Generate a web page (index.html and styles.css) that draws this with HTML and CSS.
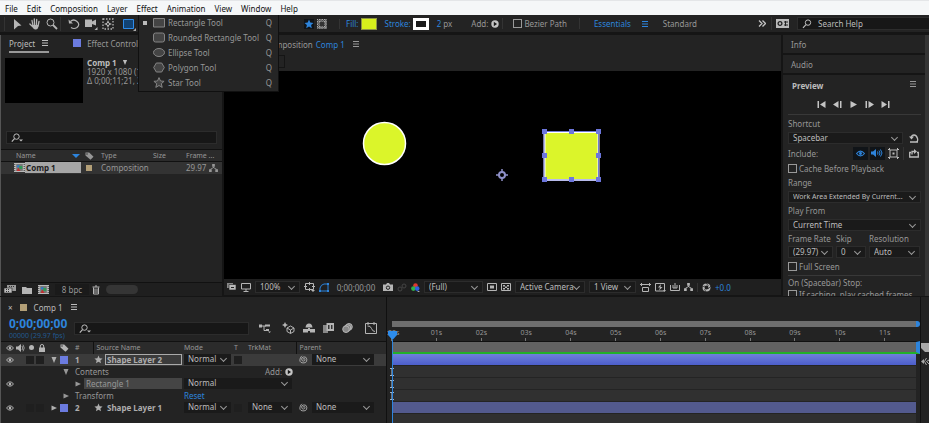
FILE: index.html
```html
<!DOCTYPE html>
<html lang="en">
<head>
<meta charset="utf-8">
<meta name="viewport" content="width=device-width, initial-scale=1">
<title>Comp 1</title>
<link rel="stylesheet" href="styles.css">
</head>
<body>
<svg class="defs" aria-hidden="true">
  <symbol id="burger" viewBox="0 0 8 8"><path d="M1 1.500h6M1 4h6M1 6.500h6" stroke="currentColor" fill="none"/></symbol>
  <symbol id="search" viewBox="0 0 12 10"><circle cx="6" cy="3.600" r="2.700" fill="none" stroke="currentColor"/><path d="M4 5.600L1 8.800" stroke="currentColor" stroke-width="1.200"/></symbol>
  <symbol id="search-menu" viewBox="0 0 12 10"><circle cx="5.500" cy="3.600" r="2.700" fill="none" stroke="currentColor"/><path d="M3.500 5.600L.8 8.600" stroke="currentColor" stroke-width="1.200"/><path d="M8 6.500h4l-2 2z" fill="currentColor"/></symbol>
  <symbol id="eye" viewBox="0 0 8 6"><path d="M.5 3Q4-1.300 7.500 3 4 7.300.5 3z" fill="none" stroke="currentColor"/><circle cx="4" cy="3" r="1.300" fill="currentColor"/></symbol>
  <symbol id="speaker" viewBox="0 0 9 8"><path d="M0 2.500h2L5 0v8L2 5.500H0z" fill="currentColor"/><path d="M6 2q1.500 2 0 4M7 .7q2.500 3.300 0 6.600" fill="none" stroke="currentColor" stroke-width=".8"/></symbol>
  <symbol id="lock" viewBox="0 0 8 8"><path d="M1 3.500h6V8H1z" fill="currentColor"/><path d="M2.300 4V2q0-1.500 1.700-1.500T5.700 2v2" fill="none" stroke="currentColor"/></symbol>
  <symbol id="tag" viewBox="0 0 9 8"><path d="M.5.500h3.700L8.500 4.700 5.500 7.700.5 3.500z" fill="currentColor"/><circle cx="2" cy="2" r=".7" fill="#232323"/></symbol>
  <symbol id="star" viewBox="0 0 10 10"><path d="M5 .6l1.300 3 3.200.3-2.400 2.200.7 3.200L5 7.600 2.200 9.300l.7-3.200L.5 3.900l3.200-.3z" fill="currentColor"/></symbol>
  <symbol id="down" viewBox="0 0 6 6"><path d="M.5 0h5L3 6z" fill="currentColor"/></symbol>
  <symbol id="right" viewBox="0 0 6 6"><path d="M.5.500v5L6 3z" fill="currentColor"/></symbol>
  <symbol id="add" viewBox="0 0 8 8"><circle cx="4" cy="4" r="3.700" fill="currentColor"/><path d="M2.800 1.800v4.400L6 4z" fill="#181818"/></symbol>
  <symbol id="flow" viewBox="0 0 10 9"><path d="M3.500 0h3v3h-3zM0 6h3v3H0zM7 6h3v3H7z" fill="currentColor"/><path d="M5 3v1.500M1.500 6l3.500-2 3.500 2" fill="none" stroke="currentColor"/></symbol>
  <symbol id="comp" viewBox="0 0 11 9"><path d="M0 0h11v9H0z" fill="#b9b9b9"/><path d="M2.200 1h6.600v7H2.200z" fill="#777"/><path d="M.8 1v7M10.200 1v7" stroke="#333" stroke-width="1" stroke-dasharray="1 1"/><circle cx="4.300" cy="3.300" r="1.400" fill="#317bc4"/><path d="M5.300 3h3v3h-3z" fill="#2f9a57"/><path d="M4.300 4.500L6.500 8h-4z" fill="#bf3030"/></symbol>
  <symbol id="whip" viewBox="0 0 9 9"><path d="M4 4.500q0-1 1-1t1 1.200-1.500 1.400T2.600 4.300 4.800 1.900 7.800 4.300 6 7.700 2 7.400 1 4 3 .8" fill="none" stroke="currentColor" stroke-width=".9"/></symbol>
  <symbol id="frame" viewBox="0 0 11 11"><path d="M2 2h7v7H2z" fill="none" stroke="currentColor"/><path d="M0 1.500h2M1.500 0v2M9 1.500h2M9.500 0v2M0 9.500h2M1.500 9v2M9 9.500h2M9.500 9v2" stroke="currentColor"/><path d="M4.500 4.500h2v2h-2z" fill="currentColor"/></symbol>
  <symbol id="ibeam" viewBox="0 0 6 8"><path d="M1 .5h4M3 .5v7M1 7.500h4" fill="none" stroke="#9fb4c8" stroke-width="1.200"/></symbol>
</svg>

<nav class="menubar" aria-label="Application menu">
  <button>File</button><button>Edit</button><button>Composition</button><button>Layer</button><button>Effect</button><button>Animation</button><button>View</button><button>Window</button><button>Help</button>
</nav>

<header class="toolbar">
  <div class="tools">
    <button aria-label="Selection"><svg width="10" height="12" viewBox="0 0 10 12"><path d="M1 1l7.500 6.500L5 8l-4 3.500z" fill="currentColor"/></svg></button>
    <button aria-label="Hand"><svg width="12" height="12" viewBox="0 0 12 12"><path d="M4 8L3 2.500M5.500 7.500L5.300 1M7.300 7.500L7.700 1.500M9 8l1-4.500M3.500 8.500L.9 6" stroke="currentColor" stroke-width="1.300" stroke-linecap="round"/><path d="M2.500 7h7Q9.500 12 6 11.500 4 11 2.500 7z" fill="currentColor"/></svg></button>
    <button aria-label="Zoom"><svg width="12" height="12" viewBox="0 0 12 12"><circle cx="4.500" cy="4.500" r="3.500" fill="none" stroke="currentColor"/><path d="M7 7l4 4" stroke="currentColor" stroke-width="1.800"/></svg></button>
  </div>
  <div class="tools spaced">
    <button aria-label="Rotate"><svg width="12" height="12" viewBox="0 0 12 12"><path d="M2.500 3.500Q5.500.5 9 3.500t0 6q-3 2-6 0" fill="none" stroke="currentColor" stroke-width="1.200"/><path d="M.5 1.500L1 5.500h4z" fill="currentColor"/></svg></button>
    <button aria-label="Camera"><svg width="14" height="12" viewBox="0 0 14 12"><path d="M1 1.500h7v2L12 1.500v6L8 6v3H1z" fill="currentColor"/><path d="M13.500 9v3h-3z" fill="currentColor"/></svg></button>
    <button aria-label="Pan behind"><svg width="12" height="12" viewBox="0 0 12 12"><path d="M1 1h10v10H1z" fill="none" stroke="currentColor" stroke-width="1.300" stroke-dasharray="1.500 1.500"/><path d="M6 2l1.200 2.800L10 6 7.200 7.200 6 10 4.800 7.200 2 6l2.800-1.200z" fill="currentColor"/><circle cx="6" cy="6" r="1" fill="#232323"/></svg></button>
  </div>
  <button class="shape-tool" aria-label="Rectangle"><svg width="14" height="14" viewBox="0 0 14 14"><path d="M1.500 2.500h10v9h-10z" fill="#124374" stroke="#2d8ceb"/><path d="M14 11v3h-3z" fill="#aaa"/></svg></button>
  <div class="shape-options">
    <button class="pressed" aria-label="Tool creates shape"><svg class="blue" width="10" height="10"><use href="#star"/></svg></button>
    <button aria-label="Tool creates mask"><svg width="10" height="10" viewBox="0 0 10 10"><path d="M0 0h10v10H0z" fill="#aaa"/><path d="M0 1.500h10M0 4h10M0 6.500h10M0 9h10M1.500 0v10M4 0v10M6.500 0v10M9 0v10" stroke="#262626" stroke-width=".8" stroke-dasharray="1.300 1"/><circle cx="5" cy="5" r="2.500" fill="#333"/></svg></button>
  </div>
  <div class="paint"><button class="link">Fill:</button><button class="swatch fill" aria-label="Fill color"></button></div>
  <div class="paint outline-paint"><button class="link">Stroke:</button><button class="swatch stroke" aria-label="Stroke color"></button></div>
  <div class="width"><button class="link">2</button><span>px</span></div>
  <button class="add-path">Add: <svg width="8" height="8"><use href="#add"/></svg></button>
  <label class="check bezier"><input type="checkbox">Bezier Path</label>
  <div class="workspaces">
    <button class="link">Essentials</button><svg class="blue" width="8" height="8"><use href="#burger"/></svg><button>Standard</button>
  </div>
  <button class="overflow" aria-label="More workspaces"><svg width="8" height="7" viewBox="0 0 8 7"><path d="M1 .5l3 3-3 3M4.500.500l3 3-3 3" fill="none" stroke="currentColor" stroke-width="1.300"/></svg></button>
  <div class="help">
    <svg width="13" height="9" viewBox="0 0 13 9"><path d="M0 0h13v9H0z" fill="#bbb"/><circle cx="4" cy="4.500" r="1.900" fill="none" stroke="#222" stroke-width="1.300"/><path d="M8 3h4M8 6h4M9.500 2v5" stroke="#222"/></svg>
    <label class="field"><svg width="12" height="10"><use href="#search"/></svg><input type="text" placeholder="Search Help" aria-label="Search Help"></label>
  </div>
  <ul class="flyout">
    <li><button><i class="mark"></i><svg width="12" height="11" viewBox="0 0 12 11"><path d="M.5 1.500h11v8.500H.5z"/></svg><span>Rectangle Tool</span><kbd>Q</kbd></button></li>
    <li><button><i></i><svg width="12" height="11" viewBox="0 0 12 11"><rect x=".5" y="1" width="11" height="9" rx="2"/></svg><span>Rounded Rectangle Tool</span><kbd>Q</kbd></button></li>
    <li><button><i></i><svg width="12" height="11" viewBox="0 0 12 11"><ellipse cx="6" cy="5.500" rx="5.500" ry="4"/></svg><span>Ellipse Tool</span><kbd>Q</kbd></button></li>
    <li><button><i></i><svg width="12" height="11" viewBox="0 0 12 11"><path d="M3.300 1h5.400l2.600 4.500L8.700 10H3.300L.7 5.500z"/></svg><span>Polygon Tool</span><kbd>Q</kbd></button></li>
    <li><button><i></i><svg width="12" height="11" viewBox="0 0 12 11"><path d="M6 .6l1.500 3.400 3.600.3-2.800 2.400.9 3.700L6 8.500l-3.200 1.900.9-3.700L.9 4.300l3.600-.3z"/></svg><span>Star Tool</span><kbd>Q</kbd></button></li>
  </ul>
</header>

<main class="panels">
  <section class="project">
    <div class="tabs">
      <button class="active">Project <svg width="8" height="8"><use href="#burger"/></svg></button>
      <button><i class="chip violet"></i>Effect Controls</button>
    </div>
    <div class="summary">
      <div class="thumb"></div>
      <div><h2>Comp 1 <svg width="6" height="5"><use href="#down"/></svg></h2><p>1920 x 1080 (1</p><p>Δ 0;00;11;21, 2</p></div>
    </div>
    <label class="field filter"><svg width="12" height="10"><use href="#search-menu"/></svg><input type="text" aria-label="Search project"></label>
    <table class="items">
      <colgroup><col class="w-icon"><col class="w-name"><col class="w-tag"><col class="w-type"><col class="w-size"><col class="w-rate"><col></colgroup>
      <thead><tr><th></th><th><span class="sorted">Name <svg class="blue" width="8" height="4" viewBox="0 0 8 4"><path d="M0 0h8L4 4z" fill="currentColor"/></svg></span></th><th><svg width="9" height="8"><use href="#tag"/></svg></th><th>Type</th><th>Size</th><th>Frame ...</th><th></th></tr></thead>
      <tbody><tr><td class="end"><svg width="11" height="9"><use href="#comp"/></svg></td><td><span class="picked">Comp 1</span></td><td><i class="chip sand"></i></td><td>Composition</td><td></td><td>29.97</td><td><svg width="9" height="8"><use href="#flow"/></svg></td></tr></tbody>
    </table>
    <footer class="bar">
      <button aria-label="Interpret footage"><svg width="12" height="9" viewBox="0 0 12 9"><path d="M3 0h9v6H3z" fill="#999"/><path d="M0 3h8v5H0z" fill="#bbb" stroke="#222" stroke-width=".6"/><path d="M2 4.500h4M2 6.500h4M5 1.500h5" stroke="#333" stroke-dasharray="1 1"/></svg></button>
      <button aria-label="New folder"><svg width="10" height="8" viewBox="0 0 10 8"><path d="M0 1h4l1 1h5v6H0z" fill="currentColor"/></svg></button>
      <button aria-label="New composition"><svg width="11" height="9"><use href="#comp"/></svg></button>
      <button class="depth">8 bpc</button>
      <button aria-label="Delete"><svg width="8" height="10" viewBox="0 0 8 10"><path d="M.5 2h7M3 1h2M1.500 2.500v6.500h5V2.500M3 3.500v4.500M5 3.500v4.500" fill="none" stroke="currentColor"/></svg></button>
      <i class="scroll"></i>
    </footer>
  </section>

  <section class="viewer">
    <div class="tabs"><button>Composition <b>Comp 1</b></button><svg width="8" height="8"><use href="#burger"/></svg></div>
    <div class="crumbs"><button aria-label="Composition navigator"></button></div>
    <div class="stage">
      <svg viewBox="0 0 557 208" role="img" aria-label="Composition">
        <circle cx="160.500" cy="72.500" r="21" fill="#dbf52a" stroke="#fff" stroke-width="1.500"/>
        <g fill="none" stroke="#8e90c8"><circle cx="278" cy="104" r="3" stroke-width="2"/><path d="M278 98v4M278 106v4M272 104h4M280 104h4" stroke-width="1.500"/></g>
        <path d="M320.500 61h54v48h-54z" fill="#dbf52a" stroke="#fff" stroke-width="2"/>
        <path d="M320 60.500h54.500v48.500H320z" fill="none" stroke="#7279d8"/>
        <path d="M318 58h5v5h-5zM345 58h5v5h-5zM372 58h5v5h-5zM318 82h5v5h-5zM372 82h5v5h-5zM318 106h5v5h-5zM345 106h5v5h-5zM372 106h5v5h-5z" fill="#6c76dc"/>
      </svg>
    </div>
    <footer class="bar">
      <button aria-label="Always preview"><svg width="10" height="8" viewBox="0 0 10 8"><path d="M0 0h6v5H0z" fill="#888"/><path d="M2 1.500h7V7H2z" fill="#bbb" stroke="#222" stroke-width=".6"/><path d="M4 4.500h3" stroke="#222"/></svg></button>
      <button aria-label="Primary viewer"><svg width="10" height="9" viewBox="0 0 10 9"><path d="M.5.500h9v5.500h-9zM5 6v2M2.500 8.500h5" fill="none" stroke="currentColor"/></svg></button>
      <span class="select zoom"><select aria-label="Magnification"><option>100%</option></select></span>
      <button aria-label="Guides"><svg width="11" height="10" viewBox="0 0 11 10"><path d="M1.500 1.500h8v6h-8zM5.500 0v3M5.500 6v3M0 4.500h3M8 4.500h3" fill="none" stroke="currentColor"/><path d="M7 8h4l-2 2z" fill="currentColor"/></svg></button>
      <button class="blue" aria-label="Mask visibility"><svg width="10" height="9" viewBox="0 0 10 9"><path d="M1 8V5q1-3.500 4-4h4v7z" fill="none" stroke="currentColor"/><path d="M0 7h2v2H0zM8 7h2v2H8zM8 0h2v2H8z" fill="currentColor"/></svg></button>
      <button class="time">0;00;00;00</button>
      <button aria-label="Snapshot"><svg width="10" height="8" viewBox="0 0 10 8"><path d="M0 1.500h3L4 0h2l1 1.500h3V8H0z" fill="currentColor"/><circle cx="5" cy="4.700" r="1.700" fill="none" stroke="#222"/></svg></button>
      <button aria-label="Show snapshot"><svg class="dim" width="10" height="9" viewBox="0 0 10 9"><circle cx="3" cy="6" r="2" fill="none" stroke="currentColor"/><circle cx="7" cy="3" r="2" fill="none" stroke="currentColor"/></svg></button>
      <button aria-label="Channels"><svg width="9" height="9" viewBox="0 0 9 9"><circle cx="4.500" cy="2.500" r="2.300" fill="#e03a2e"/><circle cx="2.400" cy="5.600" r="2.300" fill="#30b04a"/><circle cx="6.200" cy="5.600" r="2.300" fill="#2e62dd"/><path d="M6 8h3L7.500 9z" fill="#ccc"/></svg></button>
      <span class="select quality"><select aria-label="Resolution"><option>(Full)</option></select></span>
      <button aria-label="Region of interest"><svg width="10" height="8" viewBox="0 0 10 8"><path d="M.5.500h9v7h-9z" fill="none" stroke="currentColor"/><path d="M3 2.500h4v3H3z" fill="currentColor"/></svg></button>
      <button aria-label="Transparency grid"><svg width="10" height="8" viewBox="0 0 10 8"><path d="M.5.500h9v7h-9z" fill="none" stroke="currentColor"/><path d="M2 2h2v1.500H2zM6 2h2v1.500H6zM4 3.500h2V5H4zM2 5h2v1.500H2zM6 5h2v1.500H6z" fill="currentColor"/></svg></button>
      <span class="select camera"><select aria-label="Camera"><option>Active Camera</option></select></span>
      <span class="select views"><select aria-label="Views"><option>1 View</option></select></span>
      <button aria-label="Pixel aspect"><svg width="11" height="9" viewBox="0 0 11 9"><path d="M0 1.500h11M1.500 0v3M9.500 0v3M2.500 4.500h6v4h-6z" fill="none" stroke="currentColor"/></svg></button>
      <button aria-label="Fast previews"><svg width="11" height="9" viewBox="0 0 11 9"><path d="M.5.500h9v7.500h-9z" fill="none" stroke="currentColor"/><path d="M6 1L3 4.500h2L4 7.500 7.500 4h-2z" fill="currentColor"/><path d="M8 7h3L9.500 9z" fill="currentColor"/></svg></button>
      <button aria-label="Timeline"><svg width="10" height="8" viewBox="0 0 10 8"><path d="M.5 2v5.500h9V2M3 2v3h4V2M5 0v5" fill="none" stroke="currentColor"/></svg></button>
      <button aria-label="Flowchart"><svg width="9" height="8"><use href="#flow"/></svg></button>
      <button class="exposure" aria-label="Reset exposure"><svg width="9" height="9" viewBox="0 0 9 9"><circle cx="4.500" cy="4.500" r="3" fill="none" stroke="currentColor" stroke-width="2"/><path d="M4 0l2.500 3M9 3L6 6M4 9L2.500 6M0 4l3-1" stroke="#222" stroke-width=".7"/></svg></button>
      <button class="link">+0.0</button>
    </footer>
  </section>

  <aside class="side">
    <button class="fold">Info</button>
    <button class="fold">Audio</button>
    <div class="preview">
      <h2>Preview <svg width="8" height="8"><use href="#burger"/></svg></h2>
      <div class="transport">
        <button aria-label="First frame"><svg width="9" height="7" viewBox="0 0 9 7"><path d="M.5 0h1.500v7H.5zM8.500 0v7L3 3.500z" fill="currentColor"/></svg></button>
        <button aria-label="Previous frame"><svg width="9" height="7" viewBox="0 0 9 7"><path d="M7 0h1.500v7H7zM5.500 0v7L0 3.500z" fill="currentColor"/></svg></button>
        <button aria-label="Play"><svg width="9" height="7" viewBox="0 0 9 7"><path d="M1.500 0v7L8 3.500z" fill="currentColor"/></svg></button>
        <button aria-label="Next frame"><svg width="9" height="7" viewBox="0 0 9 7"><path d="M.5 0H2v7H.5zM3.500 0v7L9 3.500z" fill="currentColor"/></svg></button>
        <button aria-label="Last frame"><svg width="9" height="7" viewBox="0 0 9 7"><path d="M7 0h1.500v7H7zM.5 0v7L6 3.500z" fill="currentColor"/></svg></button>
      </div>
      <label for="shortcut">Shortcut</label>
      <div class="line"><span class="select grow"><select id="shortcut"><option>Spacebar</option></select></span><button aria-label="Reset"><svg width="10" height="9" viewBox="0 0 10 9"><path d="M2 4Q2.500 1 5 1t3.500 3.500T6 8H1M6 8h3" fill="none" stroke="currentColor" stroke-width="1.300"/><path d="M0 2.500h5L2.500 5.500z" fill="currentColor"/></svg></button></div>
      <div class="line include"><span>Include:</span>
        <button class="pressed blue" aria-label="Video"><svg width="9" height="7"><use href="#eye"/></svg></button>
        <button class="pressed blue" aria-label="Audio"><svg width="12" height="8" viewBox="0 0 12 8"><path d="M0 2.500h2L5 0v8L2 5.500H0z" fill="currentColor"/><path d="M6.500 2.500q1 1.500 0 3M8 1.500q2 2.500 0 5M9.500.5q3 3.500 0 7" fill="none" stroke="currentColor"/></svg></button>
        <button aria-label="Overlays"><svg width="11" height="11"><use href="#frame"/></svg></button>
        <button class="loop" aria-label="Loop"><svg width="10" height="9" viewBox="0 0 10 9"><path d="M2 3.500H.700V8h8.600V3.500H8M3 5.500V2.500h3" fill="none" stroke="currentColor" stroke-width="1.300"/><path d="M5 0v5l3-2.500z" fill="currentColor"/></svg></button>
      </div>
      <label class="check"><input type="checkbox">Cache Before Playback</label>
      <label for="range">Range</label>
      <span class="select dense"><select id="range"><option>Work Area Extended By Current...</option></select></span>
      <label for="from">Play From</label>
      <span class="select"><select id="from"><option>Current Time</option></select></span>
      <div class="trio">
        <label for="rate">Frame Rate</label><label for="skip">Skip</label><label for="res">Resolution</label>
        <span class="select"><select id="rate"><option>(29.97)</option></select></span><span class="select"><select id="skip"><option>0</option></select></span><span class="select"><select id="res"><option>Auto</option></select></span>
      </div>
      <label class="check"><input type="checkbox">Full Screen</label>
      <p class="stop">On (Spacebar) Stop:</p>
      <label class="check"><input type="checkbox">If caching, play cached frames</label>
    </div>
  </aside>
</main>

<section class="timeline">
  <div class="layers">
    <div class="tabs"><button class="close" aria-label="Close">×</button><i class="chip sand"></i><button>Comp 1</button><svg width="8" height="8"><use href="#burger"/></svg></div>
    <div class="controls">
      <div class="clock"><button>0;00;00;00</button><small>00000 (29.97 fps)</small></div>
      <label class="field"><svg width="12" height="10"><use href="#search-menu"/></svg><input type="text" aria-label="Search layers"></label>
      <div class="switches">
        <button aria-label="Mini-flowchart"><svg width="12" height="10" viewBox="0 0 12 10"><path d="M0 3h7M5 3v4.500h2" fill="none" stroke="currentColor"/><path d="M0 1.500h3v3H0zM6 1.500h5v2H6zM7 6h3v2H7z" fill="currentColor"/><path d="M9 8.500h3L10.500 10z" fill="currentColor"/></svg></button>
        <button aria-label="Draft 3D"><svg width="13" height="12" viewBox="0 0 13 12"><path d="M8.500 4l3.500 2v3.500l-3.500 2L5 9.500V6zM5 6l3.500 2L12 6M8.500 8v3.500" fill="none" stroke="currentColor"/><path d="M3 0l1 2 2 1-2 1-1 2-1-2-2-1 2-1z" fill="currentColor"/></svg></button>
        <button aria-label="Hide shy layers"><svg width="12" height="10" viewBox="0 0 12 10"><path d="M2.500 4.500Q3 .5 6 .5t3.500 4z" fill="currentColor"/><path d="M0 6h5v3.500H0zM7 6h5v3.500H7zM5 5h2v3H5z" fill="currentColor"/></svg></button>
        <button aria-label="Frame blending"><svg width="11" height="10" viewBox="0 0 11 10"><path d="M0 2h5v8H0z" fill="#888"/><path d="M3.500 0H11v8H3.500z" fill="currentColor"/><path d="M5 2h1.500v4H5zM8 2h1.500v4H8z" fill="#333"/></svg></button>
        <button aria-label="Motion blur"><svg width="11" height="10" viewBox="0 0 11 10"><circle cx="7" cy="3.800" r="3.300" fill="#888" stroke="currentColor"/><circle cx="5.500" cy="5" r="3.300" fill="#777" stroke="currentColor"/><circle cx="4" cy="6.200" r="3.300" fill="#888" stroke="currentColor"/></svg></button>
        <button aria-label="Graph editor"><svg width="12" height="12" viewBox="0 0 12 12"><path d="M.5 1.500h11v10H.5zM3 0v3M9 0v3" fill="none" stroke="currentColor"/><path d="M2.500 4q3-.5 4 2.500t3.500 3" fill="none" stroke="currentColor"/></svg></button>
      </div>
    </div>
    <table class="outline">
      <colgroup><col class="c-av"><col class="c-twirl"><col class="c-label"><col class="c-num"><col class="c-name"><col class="c-mode"><col class="c-t"><col class="c-trk"><col></colgroup>
      <thead><tr>
        <th><span class="av"><svg width="8" height="6"><use href="#eye"/></svg><svg width="9" height="8"><use href="#speaker"/></svg><i class="solo"></i><svg width="8" height="8"><use href="#lock"/></svg></span></th>
        <th></th><th><svg width="9" height="8"><use href="#tag"/></svg></th><th>#</th><th class="rule">Source Name</th><th>Mode</th><th>T</th><th>TrkMat</th><th class="rule">Parent</th></tr></thead>
      <tbody>
        <tr class="layer selected">
          <td><span class="av"><svg width="8" height="6"><use href="#eye"/></svg><i></i><i class="box"></i><i class="box"></i></span></td>
          <td class="end"><svg width="6" height="6"><use href="#down"/></svg></td><td><i class="chip violet"></i></td><td class="num">1</td>
          <td><span class="name"><svg width="9" height="9"><use href="#star"/></svg><b class="outlined">Shape Layer 2</b></span></td>
          <td><span class="select"><select aria-label="Mode 1"><option>Normal</option></select></span></td><td><i class="box"></i></td><td></td>
          <td><span class="parent"><svg width="9" height="9"><use href="#whip"/></svg><span class="select"><select aria-label="Parent 1"><option>None</option></select></span></span></td>
        </tr>
        <tr><td></td><td></td><td class="inset"><svg width="6" height="6"><use href="#down"/></svg></td><td colspan="4">Contents</td><td colspan="2"><span class="adder">Add: <svg width="8" height="8"><use href="#add"/></svg></span></td></tr>
        <tr><td><span class="av"><svg width="8" height="6"><use href="#eye"/></svg></span></td><td></td><td></td><td colspan="2"><span class="prop"><svg width="6" height="6"><use href="#right"/></svg><span>Rectangle 1</span></span></td><td colspan="3"><span class="select blend"><select aria-label="Rectangle mode"><option>Normal</option></select></span></td><td></td></tr>
        <tr><td></td><td></td><td class="inset"><svg width="6" height="6"><use href="#right"/></svg></td><td colspan="2">Transform</td><td colspan="4"><button class="link">Reset</button></td></tr>
        <tr class="layer">
          <td><span class="av"><svg width="8" height="6"><use href="#eye"/></svg><i></i><i class="box"></i><i class="box"></i></span></td>
          <td class="end"><svg width="6" height="6"><use href="#right"/></svg></td><td><i class="chip violet"></i></td><td class="num">2</td>
          <td><span class="name"><svg width="9" height="9"><use href="#star"/></svg><b>Shape Layer 1</b></span></td>
          <td><span class="select"><select aria-label="Mode 2"><option>Normal</option></select></span></td><td><i class="box"></i></td><td><span class="select matte"><select aria-label="Track matte 2"><option>None</option></select></span></td>
          <td><span class="parent"><svg width="9" height="9"><use href="#whip"/></svg><span class="select"><select aria-label="Parent 2"><option>None</option></select></span></span></td>
        </tr>
      </tbody>
    </table>
  </div>
  <div class="graph">
    <div class="navigator"></div>
    <div class="ruler"><span>:00s</span><span>01s</span><span>02s</span><span>03s</span><span>04s</span><span>05s</span><span>06s</span><span>07s</span><span>08s</span><span>09s</span><span>10s</span><span>11s</span></div>
    <div class="workarea"></div>
    <div class="tracks">
      <div class="clip bright"></div>
      <div><svg width="6" height="8"><use href="#ibeam"/></svg></div>
      <div><svg width="6" height="8"><use href="#ibeam"/></svg></div>
      <div><svg width="6" height="8"><use href="#ibeam"/></svg></div>
      <div class="clip"></div>
      <div class="rest"></div>
    </div>
    <i class="needle"></i>
    <svg class="playhead" width="11" height="9" viewBox="0 0 11 9"><path d="M1 0h9v4L5.500 9 1 4z" fill="#2d8ceb"/></svg>
  </div>
  <div class="gutter">
    <svg width="8" height="9" viewBox="0 0 8 9"><path d="M0 0h8v9H4L0 5z" fill="#aaa"/></svg>
    <svg width="8" height="9" viewBox="0 0 8 9"><path d="M0 4.500L3 2v5z" fill="#aaa"/><path d="M5.500 1L3.500 4.500l2 3.500M8 3L5.500 4.500 8 7" fill="none" stroke="#aaa"/></svg>
  </div>
</section>
</body>
</html>
```
FILE: styles.css
```css
:root {
  --panel: #232323;
  --edge: #151515;
  --well: #171717;
  --text: #979797;
  --bright: #bdbdbd;
  --blue: #2d84dc;
}
* { box-sizing: border-box; }
body {
  margin: 0;
  min-height: 100vh;
  display: flex;
  flex-direction: column;
  background: var(--edge);
  color: var(--text);
  font: 8px/11px "Noto Sans", "Open Sans", sans-serif;
}
button, input, select {
  margin: 0;
  padding: 0;
  border: 0;
  background: none;
  color: inherit;
  font: inherit;
}
button { display: flex; align-items: center; white-space: nowrap; }
input[type="text"] { min-width: 0; flex: 1; outline: 0; }
h2, p, ul { margin: 0; padding: 0; font-size: inherit; list-style: none; }
svg { display: block; flex: none; }
i { display: block; }
.defs { position: absolute; width: 0; height: 0; }
.blue, .link { color: var(--blue); }
.dim { color: #444; }
.pressed { background: #101418; }

.chip { width: 8px; height: 8px; flex: none; }
.violet { background: #6b7bdf; }
.sand { background: #b39f77; }

.field {
  display: flex;
  align-items: center;
  gap: 6px;
  height: 13px;
  padding: 0 4px;
  background: var(--well);
  border: 1px solid #2c2c2c;
  color: var(--bright);
}
.field input::placeholder { color: var(--bright); opacity: 1; }

.select {
  position: relative;
  display: block;
  height: 12px;
  background: #1a1a1a;
  border: 1px solid #2c2c2c;
  color: var(--bright);
}
.select select {
  appearance: none;
  display: block;
  width: 100%;
  height: 10px;
  padding: 0 10px 0 4px;
  line-height: 10px;
}
.select::after {
  content: "";
  position: absolute;
  top: 2px;
  right: 5px;
  width: 4px;
  height: 4px;
  border: solid #999;
  border-width: 0 1px 1px 0;
  transform: rotate(45deg);
  pointer-events: none;
}
.dense { font-size: 7px; }

.check { display: flex; align-items: center; gap: 2px; white-space: nowrap; }
.check input {
  appearance: none;
  width: 9px;
  height: 9px;
  border: 1px solid #999;
}

.tabs { display: flex; align-items: center; }

/* Menu bar */
.menubar {
  display: flex;
  align-items: center;
  gap: 9px;
  height: 15px;
  padding: 0 5px;
  background: #f5f7f8;
  border-top: 1px solid #e4e6e8;
  color: #111;
}

/* Toolbar */
.toolbar {
  position: relative;
  z-index: 2;
  display: flex;
  align-items: center;
  height: 20px;
  padding-left: 4px;
  background: var(--panel);
  border-bottom: 3px solid var(--edge);
}
.tools { display: flex; border-left: 1px solid #333; padding-left: 4px; width: 56px; }
.tools button { width: 17px; height: 14px; justify-content: center; color: #b5b5b5; }
.spaced { padding-left: 4px; }
.shape-tool { margin-left: 6px; }
.shape-options { display: flex; gap: 3px; margin-left: 168px; width: 36px; border-right: 1px solid #333; }
.paint { display: flex; align-items: center; gap: 2px; margin-left: 6px; }
.outline-paint { margin-left: 8px; }
.swatch { width: 16px; height: 12px; }
.fill { background: #d7f01c; border: 1px solid #8d9445; }
.stroke { background: #1b1b1b; border: 3px solid #fff; }
.width { display: flex; gap: 2px; margin-left: 8px; }
.add-path { gap: 3px; margin-left: 19px; padding-right: 3px; border-right: 1px solid #333; }
.add-path svg { color: #c4c4c4; }
.bezier { margin-left: 10px; padding-right: 12px; border-right: 1px solid #333; }
.workspaces { display: flex; align-items: center; gap: 10px; margin-left: 14px; }
.workspaces svg { margin-right: 4px; }
.overflow { margin-left: auto; margin-right: 5px; color: #c4c4c4; }
.help { display: flex; align-items: center; gap: 8px; width: 158px; padding-left: 4px; border-left: 1px solid #333; }
.help .field { flex: 1; padding: 0; gap: 4px; padding-left: 4px; }

.flyout {
  position: absolute;
  top: 0;
  left: 138px;
  width: 141px;
  padding-bottom: 1px;
  background: #252525;
  border: 1px solid #101010;
  border-top-width: 0;
}
.flyout button { width: 100%; height: 15px; padding: 0 6px 0 4px; }
.flyout i { width: 4px; height: 4px; margin-right: 6px; }
.flyout .mark { background: #bbb; }
.flyout svg { margin-right: 3px; fill: #444; stroke: #858585; }
.flyout span { flex: 1; text-align: left; }
.flyout kbd { font: inherit; }

/* Upper panels */
.panels {
  display: grid;
  grid-template-columns: 221px minmax(0, 1fr) 146px;
  gap: 2px;
  height: 261px;
  border-left: 1px solid #555;
}
.project, .viewer { display: flex; flex-direction: column; background: var(--panel); min-height: 0; min-width: 0; }

.project .tabs { gap: 24px; height: 18px; padding: 0 8px; }
.project .tabs button { gap: 6px; height: 18px; border-bottom: 2px solid transparent; }
.project .tabs .active { color: var(--bright); border-color: #999; }
.summary { display: flex; gap: 4px; padding: 5px 4px 0; height: 78px; line-height: 9px; white-space: nowrap; }
.summary h2 { display: flex; align-items: center; gap: 5px; color: var(--bright); }
.thumb { width: 78px; height: 45px; background: #000; }
.filter { margin: 0 5px 5px; }

table { border-collapse: collapse; table-layout: fixed; width: 100%; }
th, td { padding: 0; text-align: left; font-weight: 400; white-space: nowrap; }
.items { border-top: 1px solid #111; }
.items tr { height: 12px; background: #333; }
.items thead tr { background: #2b2b2b; border-bottom: 1px solid #111; font-size: 7px; }
.items .end svg { margin-left: auto; }
.w-icon { width: 24px; }
.w-name { width: 60px; }
.w-tag { width: 16px; }
.w-type { width: 52px; }
.w-size { width: 33px; }
.w-rate { width: 23px; }
.sorted { display: flex; align-items: center; justify-content: space-between; margin: 0 5px 0 -9px; }
.picked { display: block; width: 56px; padding-left: 1px; background: #a6a6a6; color: #1d1d1d; font-weight: 700; }
.items .chip { width: 6px; height: 6px; margin-left: 1px; }

.bar { display: flex; align-items: center; margin-top: auto; height: 14px; background: #1f1f1f; color: #b5b5b5; }
.project .bar { gap: 6px; padding-left: 3px; border-top: 1px solid #111; }
.depth { width: 34px; height: 11px; justify-content: center; background: #1a1a1a; color: var(--text); }
.project .bar .depth { margin-right: -3px; }
.scroll { width: 32px; height: 9px; border-radius: 5px; background: #353535; }

/* Viewer */
.viewer .tabs { gap: 7px; height: 18px; padding-left: 41px; }
.viewer .tabs b { margin-left: 3px; color: var(--blue); font-weight: 400; }
.crumbs { display: flex; padding: 2px 0 3px 8px; }
.crumbs button { width: 53px; height: 13px; border: 1px solid #151515; }
.stage { flex: 1; min-height: 0; background: #000; }
.stage svg { width: 100%; height: 100%; }
.viewer .bar { height: 17px; gap: 4px; padding-left: 3px; border-bottom: 1px solid #151515; }
.viewer .bar .link, .viewer .bar .blue { color: var(--blue); }
.zoom { width: 45px; }
.quality { width: 59px; }
.camera { width: 70px; }
.views { width: 47px; }
.time { width: 46px; justify-content: center; color: var(--text); }
.exposure { padding-left: 4px; border-left: 1px solid #333; }

/* Side column */
.side { display: flex; flex-direction: column; gap: 2px; min-height: 0; overflow: hidden; border-right: 4px solid #353535; }
.fold { height: 18px; padding-left: 8px; background: var(--panel); }
.preview { display: flex; flex-direction: column; flex: 1; min-height: 0; overflow: hidden; padding: 0 4px 0 5px; background: var(--panel); white-space: nowrap; }
.preview > * { flex: none; }
.preview h2 { display: flex; justify-content: space-between; padding: 5px 4px 7px 4px; color: var(--bright); }
.preview h2 svg { color: var(--text); }
.transport { display: flex; justify-content: center; align-items: flex-start; gap: 7px; height: 17px; padding: 3px 3px 0 0; margin-bottom: 3px; border-bottom: 1px solid #383838; color: #c4c4c4; }
.preview > label { height: 14px; }
.preview > .check { height: 12px; margin-bottom: 3px; }
.preview > .select { margin-bottom: 2px; }
.line { display: flex; align-items: center; gap: 6px; height: 12px; color: var(--bright); padding-right: 2px; }
.line .grow { flex: 1; }
.include { height: 18px; gap: 2px; }
.include span { width: 64px; color: var(--text); }
.include button { width: 15px; height: 13px; justify-content: center; }
.include .loop { margin-left: auto; width: 16px; justify-content: flex-end; border-left: 1px solid #333; }
.trio { display: grid; grid-template-columns: 45px 30px 51px; column-gap: 3px; row-gap: 2px; padding-bottom: 2px; }
.stop { padding-top: 1px; border-top: 1px solid #383838; }

/* Timeline */
.timeline {
  display: flex;
  flex: 1;
  margin-top: 1px;
  border-left: 1px solid #555;
  background: var(--panel);
}
.layers { width: 386px; flex: none; border-right: 1px solid #101010; }
.timeline .tabs { gap: 7px; height: 20px; padding-left: 7px; color: var(--bright); }
.timeline .tabs .chip { width: 7px; height: 7px; }
.controls { display: flex; align-items: flex-start; height: 24px; padding-left: 8px; }
.clock { display: flex; flex-direction: column; width: 65px; color: var(--blue); font-size: 7px; line-height: 9px; }
.clock button { font-size: 12px; line-height: 14px; font-weight: 700; }
.clock small { font-size: inherit; color: #22598f; }
.controls .field { width: 175px; margin-top: 5px; }
.switches { display: flex; align-items: center; gap: 8px; margin: 5px 0 0 10px; color: #b5b5b5; }
.switches button:nth-child(2) { margin-left: 3px; }
.switches button:last-child { margin-left: 4px; }

.outline { color: var(--text); }
.outline tr { height: 12px; }
.outline thead tr { background: #2b2b2b; border-top: 1px solid #111; font-size: 7px; }
.outline thead svg { color: #b5b5b5; }
.outline .selected { background: #3b3b3b; }
.outline .layer { color: #aeaeae; }
.c-av { width: 52px; }
.c-twirl { width: 7px; }
.c-label { width: 15px; }
.c-num { width: 18px; }
.c-name { width: 91px; }
.c-mode { width: 50px; }
.c-t { width: 14px; }
.c-trk { width: 48px; }
.outline .end svg { margin-left: -2px; }
.outline .inset { padding-left: 3px; }
.av { display: flex; align-items: center; gap: 2px; padding-left: 5px; color: #b5b5b5; }
.av i { width: 8px; height: 8px; }
.av .solo { width: 5px; height: 5px; margin: 0 2px; border-radius: 50%; background: #b5b5b5; }
.box, .av .box { width: 8px; height: 8px; background: #1f1f1f; }
.num { font-weight: 700; }
.outline .rule { padding-left: 3px; border-left: 1px solid #111; }
.name, .parent, .prop { display: flex; align-items: center; gap: 2px; }
.name { padding-left: 1px; }
.name b { flex: 1; height: 11px; padding-left: 1px; border: 1px solid transparent; line-height: 9px; margin-right: 2px; }
.name .outlined { border-color: #aaa; }
.outline .select { border: 0; height: 11px; margin-right: 3px; }
.parent { gap: 4px; padding-left: 3px; }
.parent .select { width: 62px; }
.outline .matte { margin-right: 4px; }
.blend { width: 108px; }
.adder { display: flex; align-items: center; gap: 3px; padding-left: 17px; }
.adder svg { color: #c4c4c4; }
.prop { gap: 3px; }
.prop span { flex: 1; padding-left: 2px; margin-right: 2px; background: #454545; }

.graph { position: relative; display: flex; flex-direction: column; flex: 1; min-width: 0; padding: 24px 0 0 5px; overflow: hidden; }
.navigator { height: 6px; background: #6e6e6e; border-right: 4px solid var(--blue); border-radius: 0 4px 4px 0; }
.ruler { display: grid; grid-template-columns: repeat(11, 65fr) 45fr; height: 14px; margin-right: 4px; font-size: 7px; line-height: 11px; }
.ruler span { height: 14px; margin-left: -6px; background: linear-gradient(#777, #777) 5px 100% / 1px 3px no-repeat; }
.workarea { height: 13px; background: #626262; border-right: 4px solid var(--blue); border-bottom: 2px solid #22b02a; border-top: 1px solid #111; }
.tracks { display: flex; flex-direction: column; flex: 1; margin-right: 4px; background: #303030; }
.tracks div { height: 12px; padding-top: 2px; border-bottom: 1px solid #242424; }
.tracks .clip { background: #535a8e; }
.tracks .bright { background: linear-gradient(#6f80dc, #4c5ecb); }
.tracks svg { margin-left: -3px; }
.tracks .rest { flex: 1; border: 0; }
.playhead { position: absolute; left: 0; top: 34px; }
.needle { position: absolute; left: 5px; top: 43px; bottom: 0; width: 1px; background: var(--blue); }
.gutter { display: flex; flex-direction: column; gap: 5px; width: 9px; padding-top: 46px; border-left: 1px solid #111; }
```
